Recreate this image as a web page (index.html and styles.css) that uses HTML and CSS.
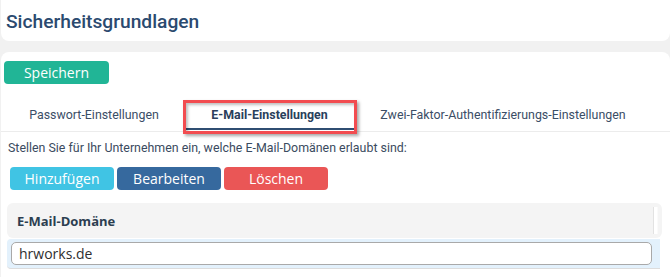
FILE: index.html
```html
<!DOCTYPE html>
<html lang="de">
<head>
<meta charset="utf-8">
<title>Sicherheitsgrundlagen</title>
<link rel="stylesheet" href="styles.css">
</head>
<body>
<header class="head-card">
  <h1 class="title">Sicherheitsgrundlagen</h1>
</header>
<main class="card">
  <div class="save-row">
    <button class="btn btn-save">Speichern</button>
  </div>
  <nav class="tabs">
    <div class="tab tab-pw">Passwort-Einstellungen</div>
    <div class="tab tab-mail tab-active">E-Mail-Einstellungen</div>
    <div class="tab tab-2fa">Zwei-Faktor-Authentifizierungs-Einstellungen</div>
  </nav>
  <p class="desc">Stellen Sie für Ihr Unternehmen ein, welche E-Mail-Domänen erlaubt sind:</p>
  <div class="actions">
    <button class="btn btn-add">Hinzufügen</button>
    <button class="btn btn-edit">Bearbeiten</button>
    <button class="btn btn-del">Löschen</button>
  </div>
  <div class="table">
    <div class="thead">
      <span class="th">E-Mail-Domäne</span>
      <span class="resizer"></span>
    </div>
    <div class="row">
      <input class="field" type="text" value="hrworks.de">
    </div>
  </div>
</main>
</body>
</html>
```
FILE: styles.css
```css
html, body {
  margin: 0;
  padding: 0;
}
body {
  background: #f1f1f1;
  width: 670px;
  height: 277px;
  overflow: hidden;
  font-family: Roboto, "Liberation Sans", sans-serif;
}
.head-card {
  background: #fff;
  height: 41px;
  margin-left: 1px;
  border-radius: 0 0 8px 8px;
  display: flex;
  align-items: center;
}
.title {
  margin: 0 0 0 5px;
  font-size: 19.2px;
  font-weight: 500;
  color: #2b4a6f;
  padding-top: 1px;
}
.card {
  margin-top: 11px;
  margin-left: 1px;
  background: #fff;
  border-radius: 8px 8px 0 0;
  height: 225px;
  padding-top: 9px;
  box-sizing: border-box;
}
.save-row {
  padding-left: 3px;
}
.btn {
  border: none;
  border-radius: 4px;
  color: #fff;
  font-family: "Open Sans", sans-serif;
  font-size: 14px;
  height: 23px;
  width: 105px;
  padding: 0;
  line-height: 23px;
  cursor: pointer;
}
.btn-save { background: #21b596; }
.tabs {
  display: flex;
  margin-top: 16px;
  padding-left: 3px;
  border-bottom: 1px solid #ececec;
  height: 31px;
}
.tab {
  font-size: 12.4px;
  color: #3b4e66;
  line-height: 30px;
  height: 30px;
  white-space: nowrap;
  text-align: center;
}
.tab-pw { width: 180px; }
.tab-mail { width: 171px; }
.tab-2fa { width: 296px; }
.tab-active {
  position: relative;
  font-weight: 700;
  color: #2a3f5c;
  border-bottom: 2px solid #2f4e72;
  height: 28px;
  line-height: 30px;
}
.tab-active::after {
  content: "";
  position: absolute;
  left: -1px;
  top: 0;
  right: -2px;
  bottom: -6px;
  border: 3px solid #f24c50;
  box-shadow: 2px 2px 3px rgba(0,0,0,0.35), inset 2px 2px 3px rgba(0,0,0,0.25);
}
.desc {
  margin: 8px 0 0 7px;
  font-size: 12.4px;
  color: #3b4b60;
  line-height: 16px;
}
.actions {
  display: flex;
  gap: 3px;
  margin: 11px 0 0 9px;
}
.actions .btn { width: 104px; }
.btn-add { background: #40c4e4; }
.btn-edit { background: #36699e; }
.btn-del { background: #ea5656; }
.table {
  margin: 13px 0 0 6px;
  width: 655px;
}
.thead {
  background: #f4f4f4;
  border-radius: 6px;
  height: 35px;
  display: flex;
  align-items: center;
  position: relative;
}
.th {
  font-family: "Open Sans", sans-serif;
  font-weight: 700;
  font-size: 13px;
  color: #2c3e50;
  padding-left: 10px;
}
.resizer {
  position: absolute;
  right: 4px;
  top: 4px;
  bottom: 4px;
  width: 3px;
  border-left: 1px solid #e2e2e2;
  border-right: 1px solid #fafafa;
  background: #fff;
}
.row {
  margin-top: 1px;
  background: #e3f1fc;
  border-radius: 4px 0 0 4px;
  padding: 3px 8px 3px 4px;
  width: 641px;
  border-bottom: 1px solid #dcdcdc;
}
.field {
  display: block;
  box-sizing: border-box;
  width: 641px;
  height: 23px;
  border: 1px solid #a9a9a9;
  border-radius: 5px;
  background: #fff;
  font-family: "Open Sans", sans-serif;
  font-size: 14px;
  color: #2f2f2f;
  padding: 0 7px;
  outline: none;
}
```
